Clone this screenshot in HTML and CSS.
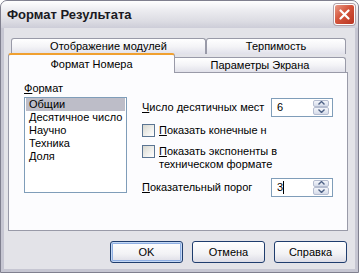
FILE: index.html
```html
<!DOCTYPE html>
<html lang="ru">
<head>
    <meta charset="UTF-8">
    <title>Формат Результата</title>
    <link rel="stylesheet" href="styles.css">
</head>
<body>
    <div class="window">
        <div class="titlebar">
            <span class="title">Формат Результата</span>
            <span class="close-btn">
                <svg width="11" height="11" viewBox="0 0 11 11">
                    <path d="M1.5 1.5 L9.5 9.5 M9.5 1.5 L1.5 9.5" stroke="#fff" stroke-width="2.2" stroke-linecap="round"/>
                </svg>
            </span>
        </div>
        <div class="body">
            <div class="tabs">
                <div class="tab-row back">
                    <div class="tab wide">Отображение модулей</div>
                    <div class="tab">Терпимость</div>
                </div>
                <div class="tab-row front">
                    <div class="tab active">Формат Номера</div>
                    <div class="tab">Параметры Экрана</div>
                </div>
            </div>
            <div class="panel">
                <div class="format-col">
                    <div class="label"><u>Ф</u>ормат</div>
                    <ul class="listbox">
                        <li class="selected">Общии</li>
                        <li>Десятичное число</li>
                        <li>Научно</li>
                        <li>Техника</li>
                        <li>Доля</li>
                    </ul>
                </div>
                <div class="options">
                    <div class="field-row">
                        <span><u>Ч</u>исло десятичных мест</span>
                        <div class="spin">
                            <span class="spin-value">6</span>
                            <span class="spin-btns">
                                <span class="spin-btn">
                                    <svg width="7" height="4" viewBox="0 0 7 4"><path d="M0.5 3.5 L3.5 0.5 L6.5 3.5" fill="none" stroke="#4d6185" stroke-width="1.4"/></svg>
                                </span>
                                <span class="spin-btn">
                                    <svg width="7" height="4" viewBox="0 0 7 4"><path d="M0.5 0.5 L3.5 3.5 L6.5 0.5" fill="none" stroke="#4d6185" stroke-width="1.4"/></svg>
                                </span>
                            </span>
                        </div>
                    </div>
                    <div class="check first">
                        <span class="box"></span>
                        <span><u>П</u>оказать конечные н</span>
                    </div>
                    <div class="check">
                        <span class="box"></span>
                        <span><u>П</u>оказать экспоненты в<br>техническом формате</span>
                    </div>
                    <div class="field-row threshold">
                        <span><u>П</u>оказательный порог</span>
                        <div class="spin">
                            <span class="spin-value">3<span class="caret"></span></span>
                            <span class="spin-btns">
                                <span class="spin-btn">
                                    <svg width="7" height="4" viewBox="0 0 7 4"><path d="M0.5 3.5 L3.5 0.5 L6.5 3.5" fill="none" stroke="#4d6185" stroke-width="1.4"/></svg>
                                </span>
                                <span class="spin-btn">
                                    <svg width="7" height="4" viewBox="0 0 7 4"><path d="M0.5 0.5 L3.5 3.5 L6.5 0.5" fill="none" stroke="#4d6185" stroke-width="1.4"/></svg>
                                </span>
                            </span>
                        </div>
                    </div>
                </div>
            </div>
            <div class="buttons">
                <button class="btn default">OK</button>
                <button class="btn">Отмена</button>
                <button class="btn">Справка</button>
            </div>
        </div>
    </div>
</body>
</html>
```

FILE: styles.css
```css
body {
    margin: 0;
    font-family: 'Liberation Sans', Arial, sans-serif;
    font-size: 11px;
    color: #000;
    background-color: #fff;
}
.window {
    width: 359px;
    height: 273px;
    box-sizing: border-box;
    display: flex;
    flex-direction: column;
    border: 1px solid #80808f;
    border-radius: 7px 7px 0 0;
    background: #c6c6d2;
    overflow: hidden;
}
.titlebar {
    height: 27px;
    flex-shrink: 0;
    display: flex;
    align-items: center;
    justify-content: space-between;
    padding: 0 3px 0 6px;
    background: linear-gradient(180deg, #ffffff 0%, #ececf0 35%, #dcdce3 75%, #cdcdd8 100%);
}
.title {
    font-weight: bold;
    font-size: 13px;
    color: #1a1a22;
}
.close-btn {
    width: 21px;
    height: 21px;
    box-sizing: border-box;
    border: 1px solid #fff;
    border-radius: 3px;
    background: linear-gradient(135deg, #e99a86 0%, #d4543b 45%, #b83522 100%);
    display: flex;
    align-items: center;
    justify-content: center;
    box-shadow: 0 0 0 1px #b0a0a8;
}
.body {
    flex: 1;
    margin: 0 3px 3px 3px;
    background: #e3e3e8;
    padding: 10px 7px 0 4px;
    display: flex;
    flex-direction: column;
}
.tabs {
    height: 34px;
    display: flex;
    flex-direction: column;
}
.tab-row {
    display: flex;
}
.tab-row.back {
    height: 16px;
    margin-left: 3px;
    margin-right: 2px;
}
.tab-row.front {
    height: 19px;
    margin-top: -1px;
    margin-right: 2px;
    align-items: flex-end;
    position: relative;
}
.tab {
    flex: 1;
    box-sizing: border-box;
    height: 16px;
    line-height: 15px;
    text-align: center;
    border: 1px solid #999aa8;
    border-bottom: none;
    border-radius: 3px 3px 0 0;
    background: linear-gradient(180deg, #ffffff 0%, #f4f4f7 50%, #e1e1ea 100%);
}
.tab-row.back .tab.wide {
    flex: 0 0 195px;
}
.tab-row.front .tab {
    height: 15px;
    line-height: 14px;
    border-radius: 0 3px 0 0;
    border-left: none;
}
.tab-row.front .tab.active {
    flex: 0 0 167px;
    height: 20px;
    line-height: 19px;
    border-left: 1px solid #999aa8;
    border-top: 2px solid #f0a030;
    border-radius: 3px 3px 0 0;
    background: #fcfcfe;
    margin-bottom: -1px;
    position: relative;
    z-index: 1;
}
.panel {
    height: 159px;
    box-sizing: border-box;
    border: 1px solid #999aa8;
    background: #fcfcfe;
    display: flex;
    padding: 9px 0 0 15px;
}
.format-col {
    width: 103px;
}
.label {
    height: 15px;
    line-height: 13px;
}
.listbox {
    list-style: none;
    margin: 0;
    padding: 0 1px;
    height: 96px;
    box-sizing: border-box;
    border: 1px solid #7f9db9;
    background: #fff;
}
.listbox li {
    height: 13px;
    line-height: 13px;
    padding-left: 3px;
}
.listbox li.selected {
    background: #bdbdc8;
}
.options {
    margin-left: 15px;
    padding-top: 15px;
    display: flex;
    flex-direction: column;
}
.field-row {
    display: flex;
    align-items: center;
    height: 20px;
}
.field-row > span:first-child {
    width: 129px;
}
.field-row.threshold {
    margin-top: 6px;
}
.spin {
    width: 62px;
    height: 19px;
    box-sizing: border-box;
    border: 1px solid #7f9db9;
    background: #fff;
    display: flex;
    align-items: center;
    justify-content: space-between;
    padding: 1px;
}
.spin-value {
    padding-left: 4px;
    display: flex;
    align-items: center;
}
.caret {
    width: 1px;
    height: 13px;
    background: #000;
}
.spin-btns {
    width: 16px;
    height: 15px;
    display: flex;
    flex-direction: column;
    margin-right: 2px;
}
.spin-btn {
    flex: 1;
    box-sizing: border-box;
    border: 1px solid #b5bdd0;
    border-radius: 2px;
    background: linear-gradient(180deg, #f4f6fb 0%, #d6dcea 100%);
    display: flex;
    align-items: center;
    justify-content: center;
}
.check {
    display: flex;
    align-items: flex-start;
    margin-top: 8px;
    line-height: 13px;
}
.check.first {
    margin-top: 7px;
}
.box {
    width: 13px;
    height: 13px;
    box-sizing: border-box;
    flex-shrink: 0;
    border: 1px solid #5b7593;
    background: linear-gradient(135deg, #d8d8d0 0%, #f1f1ee 60%, #ffffff 100%);
    margin-right: 4px;
}
.buttons {
    display: flex;
    justify-content: flex-end;
    gap: 9px;
    margin-top: 10px;
    margin-right: 1px;
}
.btn {
    width: 73px;
    height: 22px;
    font-family: 'Liberation Sans', Arial, sans-serif;
    font-size: 11px;
    color: #000;
    border: 1px solid #1f3d6e;
    border-radius: 3px;
    background: linear-gradient(180deg, #ffffff 0%, #f2f2f5 60%, #dcdce6 100%);
    padding: 0;
}
.btn.default {
    box-shadow: inset 0 0 0 1px #c4d8f4, inset 0 0 0 2px #8eaee2;
}
```
